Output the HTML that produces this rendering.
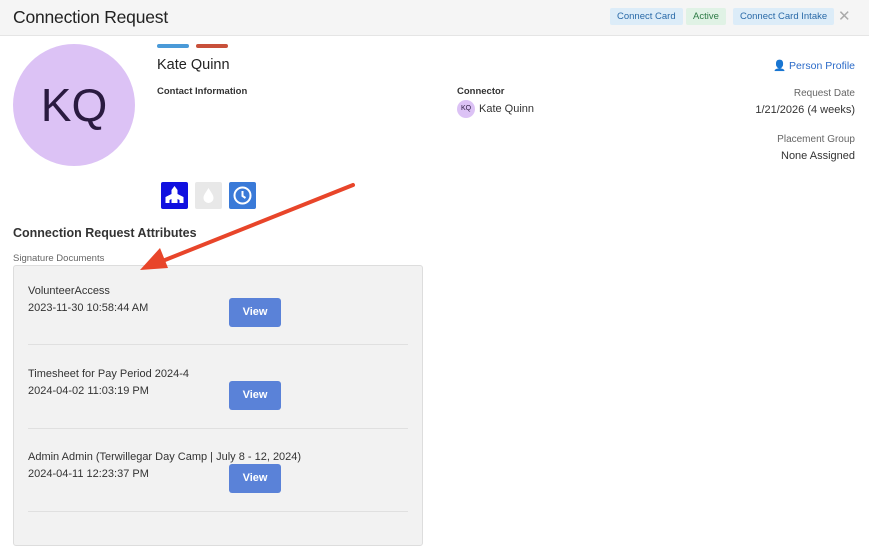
<!DOCTYPE html>
<html><head><style>
body{margin:0;width:869px;height:554px;background:#fff;font-family:"Liberation Sans",sans-serif;color:#333;position:relative;overflow:hidden}
.hdr{position:absolute;left:0;top:0;width:869px;height:35px;background:#f5f5f5;border-bottom:1px solid #e5e5e5}
.hdr h1{position:absolute;left:13px;top:7px;margin:0;font-size:17.5px;font-weight:normal;color:#222;letter-spacing:-0.2px}
.tag{position:absolute;top:8px;height:17px;font-size:9.5px;line-height:17px;padding:0 7px;border-radius:2px}
.a{position:absolute;white-space:nowrap}
.btn{position:absolute;left:229px;width:52px;height:29px;background:#5a82d8;color:#fff;border-radius:3px;font-size:11px;font-weight:bold;text-align:center;line-height:29px}
.sep{position:absolute;left:28px;width:380px;height:1px;background:#e0e0e0}
.t{font-size:11px;color:#333}
</style></head><body>
<div class="hdr"><h1>Connection Request</h1>
<div class="tag" style="left:610px;background:#dcecf8;color:#2a6aa8">Connect Card</div>
<div class="tag" style="left:686px;background:#e0f2e5;color:#2d7a45">Active</div>
<div class="tag" style="left:733px;background:#dcecf8;color:#2a6aa8">Connect Card Intake</div>
<div class="a" style="left:838px;top:7px;font-size:15px;color:#aaa">✕</div>
</div>
<div class="a" style="left:13px;top:44px;width:122px;height:122px;border-radius:50%;background:#dcc2f5;color:#2a1a40;font-size:46px;text-align:center;line-height:122px">KQ</div>
<div class="a" style="left:157px;top:44px;width:32px;height:4px;border-radius:2px;background:#4a9ad8"></div>
<div class="a" style="left:196px;top:44px;width:32px;height:4px;border-radius:2px;background:#c8503a"></div>
<div class="a" style="left:157px;top:57px;font-size:14.5px;color:#222">Kate Quinn</div>
<div class="a" style="left:157px;top:86px;font-size:9.5px;font-weight:bold;color:#333">Contact Information</div>
<div class="a" style="left:457px;top:86px;font-size:9.5px;font-weight:bold;color:#333">Connector</div>
<div class="a" style="left:457px;top:100px;width:18px;height:18px;border-radius:50%;background:#dcc2f5;font-size:7px;text-align:center;line-height:18px;color:#2a1a40">KQ</div>
<div class="a t" style="left:479px;top:103px">Kate Quinn</div>
<div class="a" style="right:14px;top:59px;font-size:10.5px;color:#2a6ac8">👤 Person Profile</div>
<div class="a" style="right:14px;top:88px;font-size:10px;color:#666">Request Date</div>
<div class="a t" style="right:14px;top:104px">1/21/2026 (4 weeks)</div>
<div class="a" style="right:14px;top:134px;font-size:10px;color:#666">Placement Group</div>
<div class="a t" style="right:14px;top:150px">None Assigned</div>
<div class="a" style="left:161px;top:182px;width:27px;height:27px;background:#1010e0;border-radius:2px"><svg width="27" height="27"><path d="M13.5 4l3 4v4l6 3v6h-4v-3l-2-1v4h-6v-4l-2 1v3h-4v-6l6-3v-4z" fill="#fff"/></svg></div>
<div class="a" style="left:195px;top:182px;width:27px;height:27px;background:#e8e8e8;border-radius:2px"><svg width="27" height="27"><path d="M13.5 6c-3 5-5 7-5 10a5 5 0 0 0 10 0c0-3-2-5-5-10z" fill="#fff"/></svg></div>
<div class="a" style="left:229px;top:182px;width:27px;height:27px;background:#3a7ad8;border-radius:2px"><svg width="27" height="27"><circle cx="13.5" cy="13.5" r="8" fill="none" stroke="#fff" stroke-width="2"/><path d="M13.5 9v5l3 2" fill="none" stroke="#fff" stroke-width="2"/></svg></div>
<div class="a" style="left:13px;top:226px;font-size:12.5px;font-weight:bold;color:#333">Connection Request Attributes</div>
<div class="a" style="left:13px;top:253px;font-size:9.5px;color:#666">Signature Documents</div>
<div class="a" style="left:13px;top:265px;width:408px;height:279px;background:#f2f2f2;border:1px solid #ddd;border-radius:3px"></div>
<div class="a t" style="left:28px;top:285px">VolunteerAccess</div>
<div class="a t" style="left:28px;top:302px">2023-11-30 10:58:44 AM</div>
<div class="btn" style="top:298px">View</div>
<div class="sep" style="top:344px"></div>
<div class="a t" style="left:28px;top:368px">Timesheet for Pay Period 2024-4</div>
<div class="a t" style="left:28px;top:385px">2024-04-02 11:03:19 PM</div>
<div class="btn" style="top:381px">View</div>
<div class="sep" style="top:428px"></div>
<div class="a t" style="left:28px;top:451px">Admin Admin (Terwillegar Day Camp | July 8 - 12, 2024)</div>
<div class="a t" style="left:28px;top:468px">2024-04-11 12:23:37 PM</div>
<div class="btn" style="top:464px">View</div>
<div class="sep" style="top:511px"></div>
<svg class="a" style="left:0;top:0" width="869" height="554"><line x1="353" y1="185" x2="160" y2="262" stroke="#e8452a" stroke-width="4" stroke-linecap="round"/><path d="M140 270L160 248L168 268z" fill="#e8452a"/></svg>
</body></html>
